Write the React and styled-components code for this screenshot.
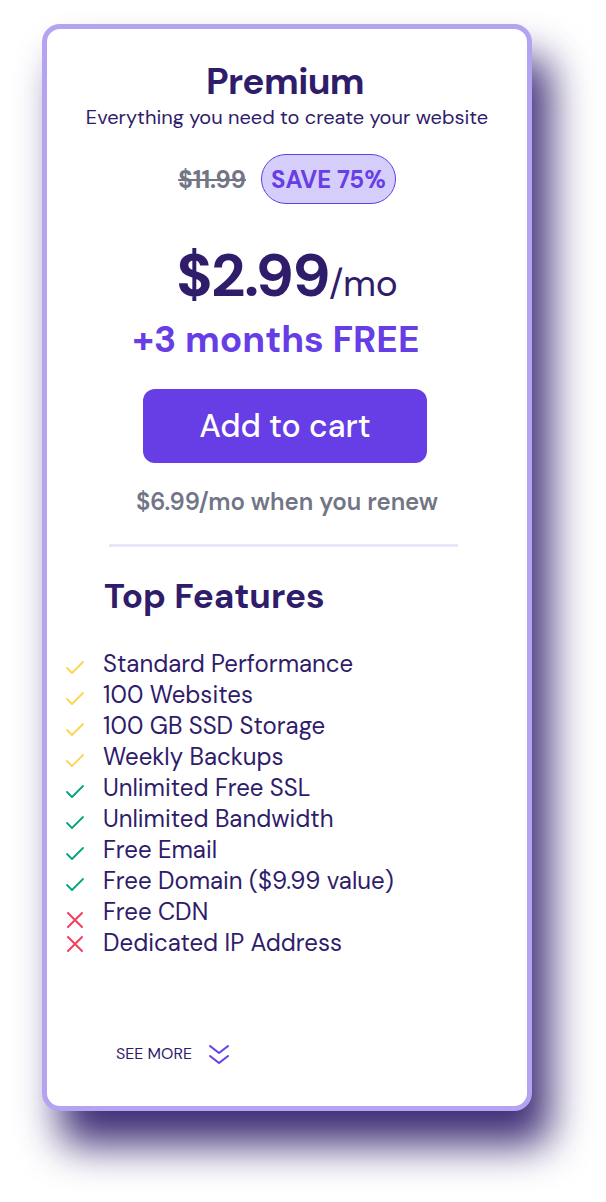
import React from "react";
import styled, { createGlobalStyle } from "styled-components";

const Global = createGlobalStyle`
  html, body { margin: 0; padding: 0; background: #ffffff; }
  body { font-family: "DM Sans", Inter, "Noto Sans", sans-serif; }
  * { box-sizing: border-box; }
`;

const Page = styled.div`
  width: 606px;
  height: 1202px;
  padding: 24px 0 0 42px;
  overflow: hidden;
`;

const Card = styled.div`
  width: 490px;
  height: 1087px;
  background: #ffffff;
  border: 5px solid #b3a3f0;
  border-radius: 18px;
  box-shadow: 18px 34px 40px 0 rgba(47, 28, 106, 0.92);
  display: flex;
  flex-direction: column;
  align-items: center;
  color: #2f1c6a;
`;

const Title = styled.h1`
  margin: 30px 4px 0 0;
  font-size: 37px;
  line-height: 44px;
  font-weight: 700;
  letter-spacing: -0.6px;
  color: #2f1c6a;
`;

const Subtitle = styled.p`
  margin: 1px 0 0;
  font-size: 20px;
  line-height: 26px;
  color: #2f1c6a;
`;

const SaveRow = styled.div`
  margin-top: 24px;
  display: flex;
  align-items: center;
  gap: 15px;
`;

const OldPrice = styled.span`
  font-size: 24px;
  font-weight: 700;
  color: #727586;
  text-decoration: line-through;
`;

const Badge = styled.span`
  height: 50px;
  padding: 0 9px;
  display: inline-flex;
  align-items: center;
  border-radius: 25px;
  border: 1px solid #673de6;
  background: #d5cdfa;
  color: #673de6;
  font-size: 24px;
  font-weight: 700;
`;

const PriceRow = styled.div`
  margin-top: 41px;
  display: flex;
  align-items: baseline;
  color: #2f1c6a;
`;

const Price = styled.span`
  font-size: 60px;
  line-height: 62px;
  font-weight: 700;
  letter-spacing: -1.5px;
`;

const Per = styled.span`
  font-size: 37px;
  line-height: 44px;
  font-weight: 400;
`;

const Free = styled.div`
  margin: 10px 22px 0 0;
  font-size: 37px;
  line-height: 44px;
  font-weight: 700;
  color: #673de6;
`;

const CartButton = styled.button`
  margin: 28px 4px 0 0;
  width: 284px;
  height: 74px;
  border: none;
  border-radius: 12px;
  background: #673de6;
  color: #ffffff;
  font-family: inherit;
  font-size: 32px;
  font-weight: 500;
  cursor: pointer;
`;

const Renew = styled.div`
  margin-top: 24px;
  font-size: 24px;
  line-height: 30px;
  font-weight: 600;
  color: #727586;
`;

const Divider = styled.hr`
  margin: 27px 8px 0 0;
  width: 349px;
  height: 3px;
  border: none;
  background: #e9e5fb;
`;

const Features = styled.div`
  align-self: stretch;
  padding: 0 0 0 16px;
  display: flex;
  flex-direction: column;
`;

const FeaturesTitle = styled.h2`
  margin: 27px 0 0 41px;
  font-size: 35px;
  line-height: 44px;
  font-weight: 700;
  color: #2f1c6a;
`;

const List = styled.ul`
  list-style: none;
  margin: 30px 0 0;
  padding: 0;
  display: flex;
  flex-direction: column;
`;

const Item = styled.li`
  display: flex;
  align-items: center;
  height: 31px;
  line-height: 31px;
  font-size: 24px;
  color: #2f1c6a;
`;

const IconBox = styled.span`
  width: 40px;
  display: inline-flex;
  align-items: center;
  padding-top: ${(p) => p.$shift}px;
  color: ${(p) => p.$color};
`;

const SeeMore = styled.button`
  margin: 86px 0 0 53px;
  align-self: flex-start;
  display: flex;
  align-items: center;
  gap: 17px;
  background: none;
  border: none;
  padding: 0;
  font-family: inherit;
  font-size: 16px;
  line-height: 20px;
  color: #2f1c6a;
  text-transform: uppercase;
  cursor: pointer;
`;

const CheckIcon = () => (
  <svg width="24" height="24" viewBox="0 0 24 24" fill="none" stroke="currentColor" strokeWidth="1.8" strokeLinecap="round" strokeLinejoin="round">
    <path d="M20 6 9 17l-5-5" />
  </svg>
);

const CrossIcon = () => (
  <svg width="24" height="24" viewBox="0 0 24 24" fill="none" stroke="currentColor" strokeWidth="2" strokeLinecap="round">
    <path d="M5 5l14 14M19 5 5 19" />
  </svg>
);

const ChevronsIcon = () => (
  <svg width="20" height="20" viewBox="0 0 20 20" fill="none" stroke="#673de6" strokeWidth="2" strokeLinecap="round" strokeLinejoin="round">
    <path d="M1 2l9 7 9-7" />
    <path d="M1 12l9 7 9-7" />
  </svg>
);

const features = [
  { text: "Standard Performance", kind: "yellow" },
  { text: "100 Websites", kind: "yellow" },
  { text: "100 GB SSD Storage", kind: "yellow" },
  { text: "Weekly Backups", kind: "yellow" },
  { text: "Unlimited Free SSL", kind: "green" },
  { text: "Unlimited Bandwidth", kind: "green" },
  { text: "Free Email", kind: "green" },
  { text: "Free Domain ($9.99 value)", kind: "green" },
  { text: "Free CDN", kind: "red", shift: 16 },
  { text: "Dedicated IP Address", kind: "red", shift: 3 },
];

const colors = { yellow: "#fdd54f", green: "#00a77f", red: "#f43f5e" };

export default function App() {
  return (
    <Page>
      <Global />
      <Card>
        <Title>Premium</Title>
        <Subtitle>Everything you need to create your website</Subtitle>
        <SaveRow>
          <OldPrice>$11.99</OldPrice>
          <Badge>SAVE 75%</Badge>
        </SaveRow>
        <PriceRow>
          <Price>$2.99</Price>
          <Per>/mo</Per>
        </PriceRow>
        <Free>+3 months FREE</Free>
        <CartButton>Add to cart</CartButton>
        <Renew>$6.99/mo when you renew</Renew>
        <Divider />
        <Features>
          <FeaturesTitle>Top Features</FeaturesTitle>
          <List>
            {features.map((f) => (
              <Item key={f.text}>
                <IconBox $color={colors[f.kind]} $shift={f.shift ?? 9}>
                  {f.kind === "red" ? <CrossIcon /> : <CheckIcon />}
                </IconBox>
                {f.text}
              </Item>
            ))}
          </List>
          <SeeMore>
            See more
            <ChevronsIcon />
          </SeeMore>
        </Features>
      </Card>
    </Page>
  );
}
